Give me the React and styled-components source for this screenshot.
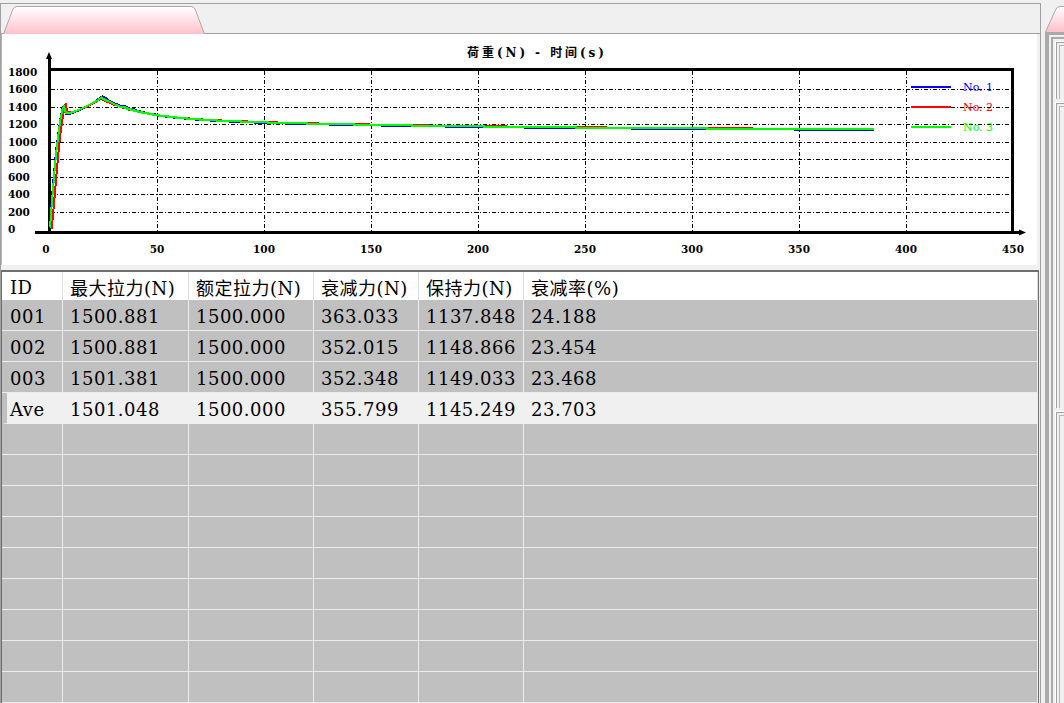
import React from 'react';
import styled, { createGlobalStyle } from 'styled-components';

const GlobalStyle = createGlobalStyle`
  html, body {
    margin: 0;
    padding: 0;
    background: #f0f0f0;
    overflow: hidden;
  }
`;

// chart scale (page pixels)
const px = (t) => 50 + t * 2.14;
const py = (v) => 229.2 - v * 0.08735;
const snap = (y) => Math.round(y) + 0.5;

const series = [
  {
    name: 'No. 1',
    color: '#0000ff',
    rise: [[0, 30], [1, 380], [2, 680], [3, 930], [4, 1120], [5, 1290], [6, 1395], [6.6, 1410], [7.6, 1320], [10, 1325], [14, 1365], [19, 1430], [24.5, 1520]],
    base: 1124,
  },
  {
    name: 'No. 2',
    color: '#ff0000',
    rise: [[0.8, 0], [1.8, 280], [2.8, 560], [3.8, 840], [4.8, 1080], [5.8, 1260], [6.8, 1390], [7.3, 1440], [8.2, 1340], [10, 1335], [14, 1370], [19, 1425], [24, 1495]],
    base: 1133,
  },
  {
    name: 'No. 3',
    color: '#00ff00',
    rise: [[0, 20], [1, 340], [2, 640], [3, 900], [4, 1100], [5, 1280], [6, 1390], [6.5, 1405], [7.5, 1330], [10, 1335], [14, 1370], [19, 1430], [24, 1505]],
    base: 1130,
  },
];

const buildPath = ({ rise, base }) => {
  let d = `M${px(rise[0][0]).toFixed(1)},${py(rise[0][1]).toFixed(1)}`;
  rise.slice(1).forEach(([t, v]) => {
    d += ` L${px(t).toFixed(1)},${py(v).toFixed(1)}`;
  });
  const t0 = rise[rise.length - 1][0];
  const peak = rise[rise.length - 1][1];
  let lastY = Math.round(py(peak));
  for (let t = Math.ceil(t0); t <= 385; t += 1) {
    const dt = t - t0;
    const v = base + (peak - base - 150) * Math.exp(-dt / 16.9) + 150 * Math.exp(-dt / 150);
    const y = Math.round(py(v));
    if (t < 34) {
      d += ` L${px(t).toFixed(1)},${y}`;
    } else if (y !== lastY) {
      d += ` H${px(t).toFixed(1)} V${y}`;
    }
    lastY = y;
  }
  d += ` H${px(385).toFixed(1)}`;
  return d;
};

const Y_TICKS = [0, 200, 400, 600, 800, 1000, 1200, 1400, 1600, 1800];
const X_TICKS = [0, 50, 100, 150, 200, 250, 300, 350, 400, 450];

const headers = ['ID', '最大拉力(N)', '额定拉力(N)', '衰减力(N)', '保持力(N)', '衰减率(%)'];
const rows = [
  ['001', '1500.881', '1500.000', '363.033', '1137.848', '24.188'],
  ['002', '1500.881', '1500.000', '352.015', '1148.866', '23.454'],
  ['003', '1501.381', '1500.000', '352.348', '1149.033', '23.468'],
];
const average = ['Ave', '1501.048', '1500.000', '355.799', '1145.249', '23.703'];

const Screen = styled.div`
  display: flex;
  width: 1064px;
  height: 703px;
  background: #f0f0f0;
  overflow: hidden;
  font-family: 'DejaVu Serif', 'Noto Sans CJK SC', serif;
`;

const LeftPane = styled.div`
  flex: none;
  width: 1041px;
  height: 700px;
  margin-top: 3px;
  box-sizing: border-box;
  border: 1px solid #a0a0a0;
  border-bottom: none;
  display: flex;
  flex-direction: column;
`;

const TabStrip = styled.div`
  flex: none;
  height: 29px;
  display: flex;
  align-items: flex-end;
  border-bottom: 1px solid #a0a0a0;
`;

const Tab = styled.div`
  position: relative;
  width: 202px;
  height: 28px;
  margin-left: ${(p) => p.$left}px;
  margin-bottom: -1px;
  svg {
    display: block;
  }
`;

const ChartBox = styled.div`
  flex: none;
  height: 231px;
  margin-right: 3px;
  border-left: 1px solid #b9b9b9;
  background: #fff;
  svg {
    display: block;
  }
`;

const TableFrame = styled.div`
  flex: 1;
  margin-top: 5px;
  margin-right: 1px;
  border-top: 2px solid #6e6e6e;
  border-left: 1px solid #6e6e6e;
  border-right: 1px solid #6e6e6e;
  background: #c0c0c0;
  overflow: hidden;
`;

const Row = styled.div`
  display: grid;
  grid-template-columns: 61px 126px 125px 105px 105px 1fr;
  height: ${(p) => (p.$head ? 28 : 31)}px;
`;

const rowColors = {
  head: { bg: '#ffffff', line: '#dcdcdc' },
  data: { bg: '#c0c0c0', line: '#ececec' },
  ave: { bg: '#f0f0f0', line: '#f0f0f0' },
};

const Cell = styled.div`
  box-sizing: border-box;
  display: flex;
  align-items: center;
  padding-left: 7px;
  padding-top: 2px;
  white-space: nowrap;
  overflow: hidden;
  font-size: 18px;
  letter-spacing: 0.5px;
  color: #000;
  background: ${(p) => rowColors[p.$kind].bg};
  border-right: 1px solid ${(p) => rowColors[p.$kind].line};
  border-bottom: ${(p) => (p.$kind === 'head' ? 'none' : `1px solid ${rowColors[p.$kind].line}`)};
  &:first-child {
    padding-left: ${(p) => (p.$mark ? 3 : 8)}px;
    border-left: ${(p) => (p.$mark ? '5px solid #c0c0c0' : 'none')};
  }
`;

const RightPane = styled.div`
  flex: 1;
  display: flex;
  flex-direction: column;
  padding-left: 4px;
  padding-top: 6px;
`;

const RightTab = styled.div`
  flex: none;
  height: 26px;
  svg {
    display: block;
  }
`;

const RightFrame = styled.div`
  flex: 1;
  display: flex;
  border-top: 3px solid #a9a9a9;
  border-left: 4px solid #a9a9a9;
  padding: 2px 0 0 2px;
`;

const RightInner = styled.div`
  flex: 1;
  display: flex;
  flex-direction: column;
  gap: 3px;
  border-top: 2px solid #a9a9a9;
  border-left: 2px solid #a9a9a9;
  padding: 2px 0 0 2px;
`;

const RightGroup = styled.div`
  flex: ${(p) => (p.$h ? 'none' : 1)};
  height: ${(p) => (p.$h ? `${p.$h}px` : 'auto')};
  border-top: 1px solid #ffffff;
  border-left: 1px solid #ffffff;
  box-shadow: inset 1px 1px 0 #a0a0a0, inset 3px 3px 0 #f0f0f0, inset 4px 4px 0 #b4b4b4;
  background: #f0f0f0;
`;

const TabShape = ({ w, h, slant }) => (
  <svg width={w} height={h}>
    <defs>
      <linearGradient id={`tabfill${w}`} x1="0" y1="0" x2="0" y2="1">
        <stop offset="0" stopColor="#ffffff" />
        <stop offset="1" stopColor="#ffc0cb" />
      </linearGradient>
    </defs>
    <path
      d={`M0.5,${h} L${slant},3 Q${slant + 1.5},0.5 ${slant + 4},0.5 L${w - slant - 4},0.5 Q${w - slant - 1.5},0.5 ${w - slant},3 L${w - 0.5},${h}`}
      fill={`url(#tabfill${w})`}
      stroke="#a8a8a8"
      strokeWidth="1"
    />
  </svg>
);

const Chart = () => {
  const axisFont = "'DejaVu Serif', 'Liberation Serif', serif";
  return (
    <svg width="1035" height="231" viewBox="2 34 1035 231">
      <text
        x="467"
        y="57"
        textLength="137"
        lengthAdjust="spacing"
        fontFamily="'DejaVu Serif', 'Noto Sans CJK SC', serif"
        fontWeight="bold"
        fontSize="12"
        fill="#000"
      >
        荷重(N) - 时间(s)
      </text>

      {/* grid */}
      <g stroke="#000" strokeWidth="1" strokeDasharray="4 2 1 2" shapeRendering="crispEdges">
        {Y_TICKS.slice(1, -1).map((v) => (
          <line key={v} x1="51" x2="1011" y1={snap(py(v))} y2={snap(py(v))} />
        ))}
        {X_TICKS.slice(1, -1).map((t) => (
          <line key={t} x1={Math.round(px(t)) + 0.5} x2={Math.round(px(t)) + 0.5} y1="71" y2="231" />
        ))}
      </g>

      {/* frame and axes */}
      <g stroke="#000" strokeWidth="3" shapeRendering="crispEdges">
        <line x1="49" x2="1014" y1="69.5" y2="69.5" />
        <line x1="1012.5" x2="1012.5" y1="68" y2="234" />
        <line x1="49" x2="49" y1="56" y2="234" />
        <line x1="35" x2="1020" y1="232.5" y2="232.5" />
      </g>
      <polygon points="49,52 46,59 52,59" fill="#000" />
      <polygon points="1026,232.5 1019,229.5 1019,235.5" fill="#000" />

      {/* tick labels */}
      <g fontFamily={axisFont} fontWeight="bold" fontSize="10.5" fill="#000">
        {Y_TICKS.map((v) => (
          <text key={v} x="8" y={py(v) + 4}>
            {v}
          </text>
        ))}
        {X_TICKS.map((t) => (
          <text key={t} x={t === 0 ? 46 : px(t)} y="253" textAnchor="middle">
            {t}
          </text>
        ))}
      </g>

      {/* data */}
      {series.map((s) => (
        <path key={s.name} d={buildPath(s)} fill="none" stroke={s.color} strokeWidth="2" shapeRendering="crispEdges" />
      ))}

      {/* legend */}
      {series.map((s, i) => (
        <g key={s.name}>
          <line x1="911" x2="951" y1={87 + i * 20} y2={87 + i * 20} stroke={s.color} strokeWidth="2" shapeRendering="crispEdges" />
          <text x="963" y={91 + i * 20} fontFamily={axisFont} fontSize="11" fill={s.color}>
            {s.name}
          </text>
        </g>
      ))}
    </svg>
  );
};

const TableRow = ({ kind, values, mark }) => (
  <Row $head={kind === 'head'}>
    {values.map((v, i) => (
      <Cell key={i} $kind={kind} $mark={mark}>
        {v}
      </Cell>
    ))}
  </Row>
);

const App = () => {
  const empty = Array.from({ length: 10 }, () => ['', '', '', '', '', '']);
  return (
    <>
      <GlobalStyle />
      <Screen>
        <LeftPane>
          <TabStrip>
            <Tab $left={2}>
              <TabShape w={202} h={28} slant={10} />
            </Tab>
          </TabStrip>
          <ChartBox>
            <Chart />
          </ChartBox>
          <TableFrame>
            <TableRow kind="head" values={headers} />
            {rows.map((r) => (
              <TableRow key={r[0]} kind="data" values={r} />
            ))}
            <TableRow kind="ave" values={average} mark />
            {empty.map((r, i) => (
              <TableRow key={i} kind="data" values={r} />
            ))}
          </TableFrame>
        </LeftPane>
        <RightPane>
          <RightTab>
            <TabShape w={60} h={26} slant={11} />
          </RightTab>
          <RightFrame>
            <RightInner>
              <RightGroup $h={57} />
              <RightGroup $h={305} />
              <RightGroup />
            </RightInner>
          </RightFrame>
        </RightPane>
      </Screen>
    </>
  );
};

export default App;
